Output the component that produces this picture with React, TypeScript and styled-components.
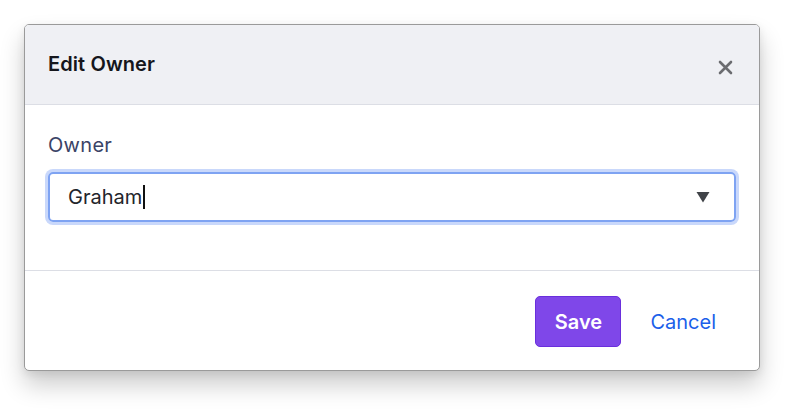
import styled, { createGlobalStyle } from 'styled-components'

const GlobalStyle = createGlobalStyle`
  html, body {
    margin: 0;
    padding: 0;
    background: #ffffff;
    font-family: Inter, "Noto Sans", sans-serif;
  }
`

const Page = styled.div`
  width: 800px;
  height: 412px;
  padding: 24px;
  box-sizing: border-box;
`

const Dialog = styled.div`
  width: 736px;
  height: 347px;
  box-sizing: border-box;
  border: 1px solid #9a9a9a;
  border-radius: 5px;
  background: #ffffff;
  box-shadow: 0 14px 24px rgba(0, 0, 0, 0.2), 0 3px 8px rgba(0, 0, 0, 0.08);
  display: flex;
  flex-direction: column;
  overflow: hidden;
`

const Header = styled.div`
  height: 80px;
  box-sizing: border-box;
  background: #eff0f4;
  border-bottom: 1px solid #dcdee5;
  display: flex;
  align-items: center;
  justify-content: space-between;
  padding: 0 26px 0 23px;
`

const Title = styled.h2`
  margin: 0;
  margin-top: -2px;
  font-size: 20px;
  font-weight: 600;
  letter-spacing: 0.1px;
  color: #15161c;
`

const CloseButton = styled.button`
  border: none;
  background: none;
  padding: 0;
  width: 16px;
  height: 16px;
  margin-top: 6px;
  display: flex;
  align-items: center;
  justify-content: center;
  cursor: pointer;
`

const Body = styled.div`
  height: 166px;
  box-sizing: border-box;
  border-bottom: 1px solid #dcdee5;
  padding: 28px 23px 0 23px;
`

const Label = styled.label`
  display: block;
  font-size: 20px;
  letter-spacing: 0.3px;
  color: #3a4366;
  line-height: 24px;
  margin-bottom: 15px;
`

const SelectBox = styled.div`
  height: 50px;
  box-sizing: border-box;
  border: 2px solid #7ea3f2;
  border-radius: 5px;
  box-shadow: 0 0 0 3px #c9d8fb;
  display: flex;
  align-items: center;
  padding: 0 24px 0 18px;
`

const SelectValue = styled.span`
  font-size: 20px;
  color: #23252b;
  flex: 1;
  display: flex;
  align-items: center;
`

const Caret = styled.span`
  display: inline-block;
  width: 1.5px;
  height: 24px;
  background: #111;
  margin-left: 1px;
`

const Footer = styled.div`
  flex: 1;
  display: flex;
  align-items: center;
  justify-content: flex-end;
  padding: 2px 24px 0 0;
  gap: 10px;
`

const SaveButton = styled.button`
  width: 86px;
  height: 51px;
  box-sizing: border-box;
  border: 1px solid #6a2fdc;
  border-radius: 5px;
  background: #7f47e9;
  color: #ffffff;
  font-family: inherit;
  font-size: 20px;
  font-weight: 600;
  cursor: pointer;
`

const CancelButton = styled.button`
  border: none;
  background: none;
  height: 51px;
  padding: 0 19px;
  color: #1b5fea;
  font-family: inherit;
  font-size: 20px;
  cursor: pointer;
`

export default function App() {
  return (
    <>
      <GlobalStyle />
      <Page>
        <Dialog>
          <Header>
            <Title>Edit Owner</Title>
            <CloseButton aria-label="Close">
              <svg width="15" height="15" viewBox="0 0 15 15">
                <path d="M2 2 L13 13 M13 2 L2 13" stroke="#6b6c70" strokeWidth="2.6" strokeLinecap="round" />
              </svg>
            </CloseButton>
          </Header>
          <Body>
            <Label>Owner</Label>
            <SelectBox>
              <SelectValue>
                Graham
                <Caret />
              </SelectValue>
              <svg width="14" height="12" viewBox="0 0 14 12">
                <path d="M0.5 1 L13.5 1 L7 11.5 Z" fill="#404348" />
              </svg>
            </SelectBox>
          </Body>
          <Footer>
            <SaveButton>Save</SaveButton>
            <CancelButton>Cancel</CancelButton>
          </Footer>
        </Dialog>
      </Page>
    </>
  )
}
